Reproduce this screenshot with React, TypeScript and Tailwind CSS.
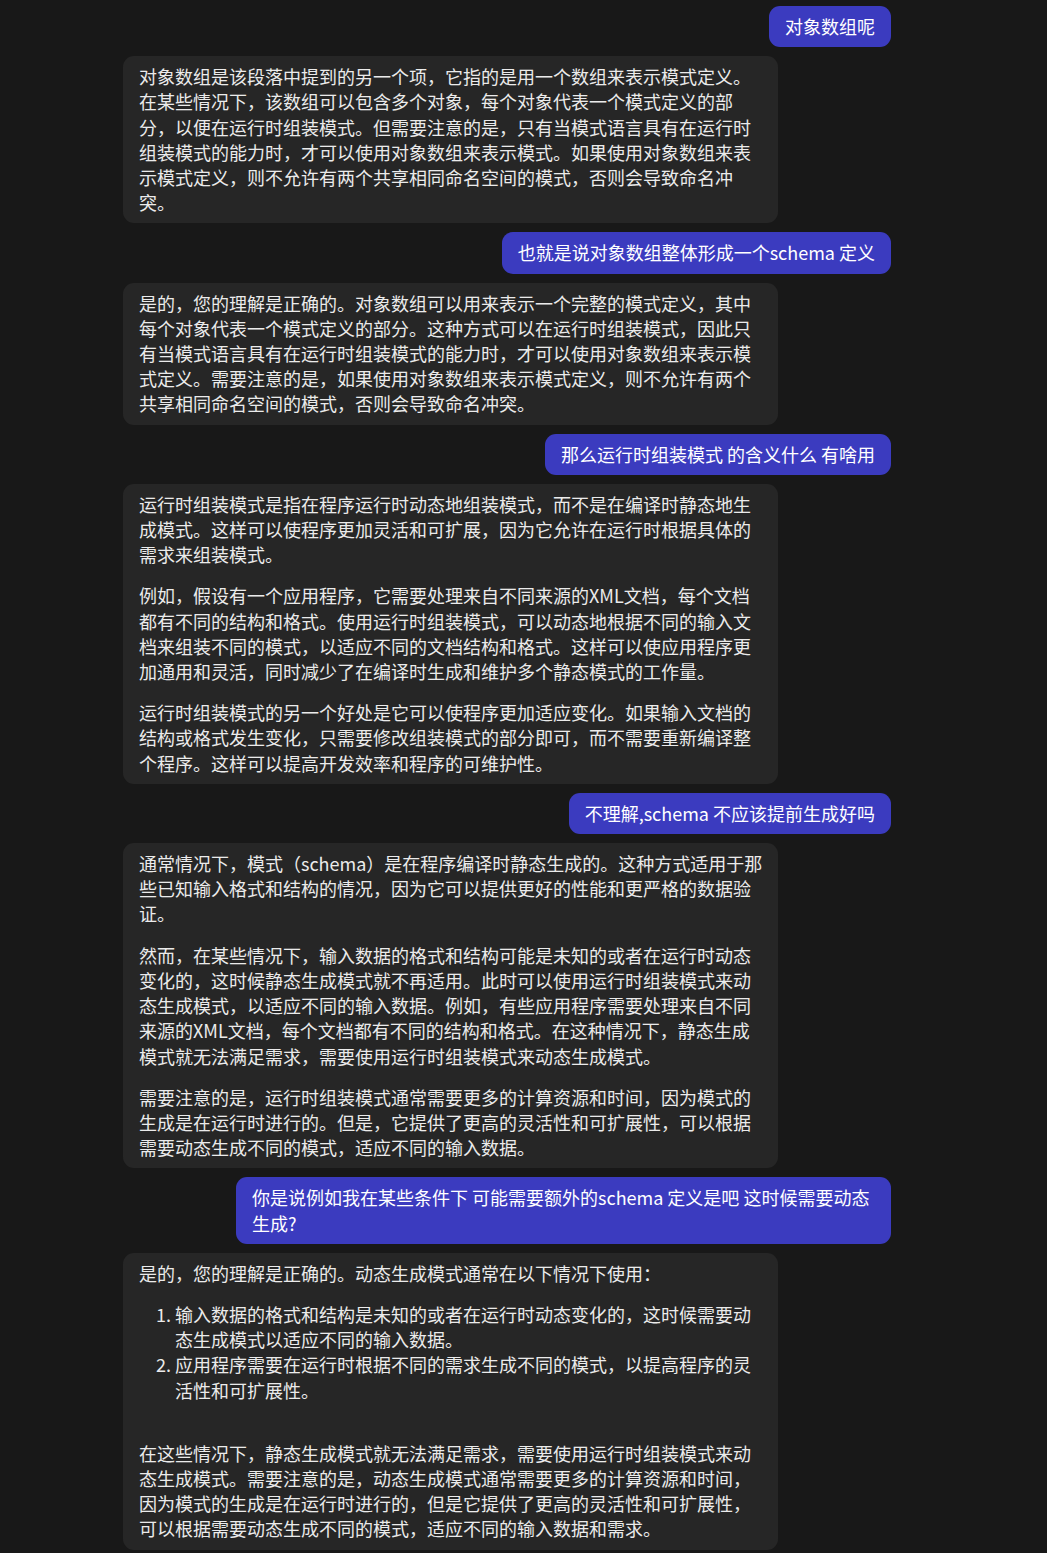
import React from 'react'

type Para = string | { text: string; cls: string }

type Msg =
  | { role: 'user'; text: string }
  | { role: 'assistant'; paras: Para[]; list?: string[]; after?: string }

const messages: Msg[] = [
  { role: 'user', text: '对象数组呢' },
  {
    role: 'assistant',
    paras: [
      '对象数组是该段落中提到的另一个项，它指的是用一个数组来表示模式定义。在某些情况下，该数组可以包含多个对象，每个对象代表一个模式定义的部分，以便在运行时组装模式。但需要注意的是，只有当模式语言具有在运行时组装模式的能力时，才可以使用对象数组来表示模式。如果使用对象数组来表示模式定义，则不允许有两个共享相同命名空间的模式，否则会导致命名冲突。',
    ],
  },
  { role: 'user', text: '也就是说对象数组整体形成一个schema 定义' },
  {
    role: 'assistant',
    paras: [
      '是的，您的理解是正确的。对象数组可以用来表示一个完整的模式定义，其中每个对象代表一个模式定义的部分。这种方式可以在运行时组装模式，因此只有当模式语言具有在运行时组装模式的能力时，才可以使用对象数组来表示模式定义。需要注意的是，如果使用对象数组来表示模式定义，则不允许有两个共享相同命名空间的模式，否则会导致命名冲突。',
    ],
  },
  { role: 'user', text: '那么运行时组装模式 的含义什么 有啥用' },
  {
    role: 'assistant',
    paras: [
      '运行时组装模式是指在程序运行时动态地组装模式，而不是在编译时静态地生成模式。这样可以使程序更加灵活和可扩展，因为它允许在运行时根据具体的需求来组装模式。',
      '例如，假设有一个应用程序，它需要处理来自不同来源的XML文档，每个文档都有不同的结构和格式。使用运行时组装模式，可以动态地根据不同的输入文档来组装不同的模式，以适应不同的文档结构和格式。这样可以使应用程序更加通用和灵活，同时减少了在编译时生成和维护多个静态模式的工作量。',
      '运行时组装模式的另一个好处是它可以使程序更加适应变化。如果输入文档的结构或格式发生变化，只需要修改组装模式的部分即可，而不需要重新编译整个程序。这样可以提高开发效率和程序的可维护性。',
    ],
  },
  { role: 'user', text: '不理解,schema 不应该提前生成好吗' },
  {
    role: 'assistant',
    paras: [
      {
        // latin glyphs run a bit wider than the original font, give this one a few px
        text: '通常情况下，模式（schema）是在程序编译时静态生成的。这种方式适用于那些已知输入格式和结构的情况，因为它可以提供更好的性能和更严格的数据验证。',
        cls: '-mr-[6px]',
      },
      '然而，在某些情况下，输入数据的格式和结构可能是未知的或者在运行时动态变化的，这时候静态生成模式就不再适用。此时可以使用运行时组装模式来动态生成模式，以适应不同的输入数据。例如，有些应用程序需要处理来自不同来源的XML文档，每个文档都有不同的结构和格式。在这种情况下，静态生成模式就无法满足需求，需要使用运行时组装模式来动态生成模式。',
      '需要注意的是，运行时组装模式通常需要更多的计算资源和时间，因为模式的生成是在运行时进行的。但是，它提供了更高的灵活性和可扩展性，可以根据需要动态生成不同的模式，适应不同的输入数据。',
    ],
  },
  { role: 'user', text: '你是说例如我在某些条件下 可能需要额外的schema 定义是吧 这时候需要动态生成?' },
  {
    role: 'assistant',
    paras: ['是的，您的理解是正确的。动态生成模式通常在以下情况下使用：'],
    list: [
      '输入数据的格式和结构是未知的或者在运行时动态变化的，这时候需要动态生成模式以适应不同的输入数据。',
      '应用程序需要在运行时根据不同的需求生成不同的模式，以提高程序的灵活性和可扩展性。',
    ],
    after:
      '在这些情况下，静态生成模式就无法满足需求，需要使用运行时组装模式来动态生成模式。需要注意的是，动态生成模式通常需要更多的计算资源和时间，因为模式的生成是在运行时进行的，但是它提供了更高的灵活性和可扩展性，可以根据需要动态生成不同的模式，适应不同的输入数据和需求。',
  },
]

const UserBubble = ({ text }: { text: string }) => (
  <div className="self-end max-w-[655px] bg-[#3b3bbf] text-white rounded-[11px] px-4 py-2">
    {text}
  </div>
)

const AssistantBubble = ({ msg }: { msg: Extract<Msg, { role: 'assistant' }> }) => (
  <div className="self-start max-w-[655px] bg-[#262626] text-[#ebebeb] rounded-[11px] px-4 py-2 flex flex-col gap-4">
    {msg.paras.map((p, i) =>
      typeof p === 'string' ? <p key={i}>{p}</p> : <p key={i} className={p.cls}>{p.text}</p>
    )}
    {msg.list && (
      <ol className="list-decimal pl-[36px]">
        {msg.list.map((item, i) => <li key={i}>{item}</li>)}
      </ol>
    )}
    {msg.after && <p className="mt-[22px]">{msg.after}</p>}
  </div>
)

export default function App() {
  return (
    <div
      className="min-h-screen w-full bg-[#181818] text-[18px] leading-[25.2px]"
      style={{ fontFamily: '"Noto Sans CJK SC", "Noto Sans", sans-serif' }}
    >
      <div className="w-[768px] ml-[123px] pt-[6px] pb-2 flex flex-col gap-[9px]">
        {messages.map((m, i) =>
          m.role === 'user' ? <UserBubble key={i} text={m.text} /> : <AssistantBubble key={i} msg={m} />
        )}
      </div>
    </div>
  )
}
